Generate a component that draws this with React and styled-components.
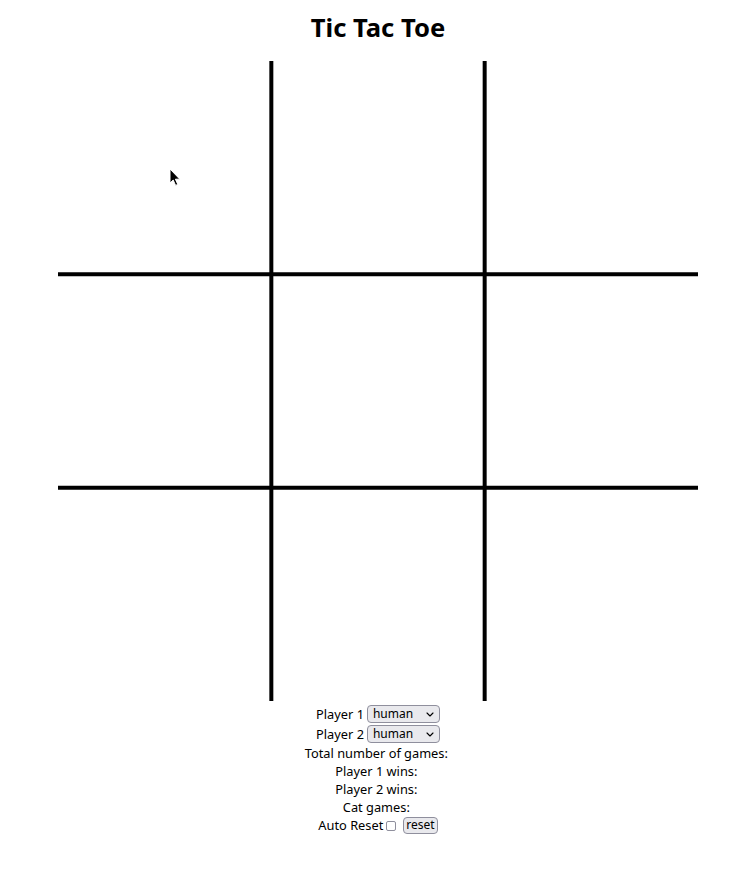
import styled, { createGlobalStyle } from 'styled-components';
import { useState } from 'react';

const Global = createGlobalStyle`
    html, body {
        margin: 0;
        padding: 0;
        background: #ffffff;
    }
    body {
        font-family: 'Noto Sans', 'DejaVu Sans', sans-serif;
        color: #000000;
    }
`;

const SIZE = 640;
const STEP = SIZE / 3;

function Board() {
    return (
        <BoardSvg width={SIZE} height={SIZE} viewBox={`0 0 ${SIZE} ${SIZE}`}>
            <line x1={STEP} y1="0" x2={STEP} y2={SIZE} stroke="#000" strokeWidth="4" />
            <line x1={STEP * 2} y1="0" x2={STEP * 2} y2={SIZE} stroke="#000" strokeWidth="4" />
            <line x1="0" y1={STEP} x2={SIZE} y2={STEP} stroke="#000" strokeWidth="4" />
            <line x1="0" y1={STEP * 2} x2={SIZE} y2={STEP * 2} stroke="#000" strokeWidth="4" />
            {/* mouse pointer caught in the shot */}
            <path
                d="M112 108 L112 122 L115.2 119 L117.6 124.4 L119.8 123.4 L117.4 118.2 L121.8 118.2 Z"
                fill="#000"
                stroke="#fff"
                strokeWidth="1"
                strokeLinejoin="round"
            />
        </BoardSvg>
    );
}

function PlayerSelect({ value, onChange }) {
    return (
        <SelectWrap>
            <Picker value={value} onChange={(e) => onChange(e.target.value)}>
                <option value="human">human</option>
                <option value="computer">computer</option>
            </Picker>
            <Chevron width="8" height="5" viewBox="0 0 8 5">
                <path d="M1 1 L4 4 L7 1" fill="none" stroke="#000" strokeWidth="1.1" strokeLinecap="round" strokeLinejoin="round" />
            </Chevron>
        </SelectWrap>
    );
}

export default function App() {
    const [player1, setPlayer1] = useState('human');
    const [player2, setPlayer2] = useState('human');
    const [autoReset, setAutoReset] = useState(false);

    return (
        <Page>
            <Global />
            <Title>Tic Tac Toe</Title>
            <Board />
            <Controls>
                <SelectRow>
                    Player 1
                    <PlayerSelect value={player1} onChange={setPlayer1} />
                </SelectRow>
                <SelectRow>
                    Player 2
                    <PlayerSelect value={player2} onChange={setPlayer2} />
                </SelectRow>
                <Stat>Total number of games: </Stat>
                <Stat>Player 1 wins: </Stat>
                <Stat>Player 2 wins: </Stat>
                <Stat>Cat games: </Stat>
                <ResetRow>
                    Auto Reset
                    <Check type="checkbox" checked={autoReset} onChange={(e) => setAutoReset(e.target.checked)} />
                    <ResetButton>reset</ResetButton>
                </ResetRow>
            </Controls>
        </Page>
    );
}

const Page = styled.div`
    width: 740px;
    padding-left: 16px;
    box-sizing: border-box;
    display: flex;
    flex-direction: column;
    align-items: center;
`;

const Title = styled.h1`
    font-family: 'Noto Sans', sans-serif;
    font-weight: 700;
    font-size: 25.6px;
    line-height: 35px;
    margin: 10px 0 16px;
`;

const BoardSvg = styled.svg`
    display: block;
    flex-shrink: 0;
`;

const Controls = styled.div`
    display: flex;
    flex-direction: column;
    align-items: center;
    margin-top: 3px;
    font-size: 12.8px;
    line-height: 18px;
`;

const SelectRow = styled.div`
    display: flex;
    align-items: center;
    gap: 3px;
    height: 20px;
`;

const ResetRow = styled(SelectRow)`
    gap: 0;
    height: 18px;
`;

const Stat = styled.div`
    height: 18px;
    white-space: pre;
`;

const SelectWrap = styled.span`
    position: relative;
    display: inline-flex;
`;

const Picker = styled.select`
    appearance: none;
    font-family: 'Noto Sans', sans-serif;
    font-size: 12px;
    line-height: 16px;
    width: 73px;
    height: 18px;
    padding: 0 14px 0 5px;
    border: 1px solid #8f8f9d;
    border-radius: 4px;
    background: #e9e9ed;
    color: #000;
`;

const Chevron = styled.svg`
    position: absolute;
    right: 6px;
    top: 7px;
    pointer-events: none;
`;

const Check = styled.input`
    appearance: none;
    width: 10px;
    height: 10px;
    margin: 1px 7px 0 3px;
    border: 1px solid #8f8f9d;
    border-radius: 2px;
    background: #fff;
`;

const ResetButton = styled.button`
    font-family: 'Noto Sans', sans-serif;
    font-size: 12px;
    line-height: 14px;
    height: 17px;
    padding: 0 2px;
    border: 1px solid #8f8f9d;
    border-radius: 4px;
    background: #e9e9ed;
    color: #000;
`;
